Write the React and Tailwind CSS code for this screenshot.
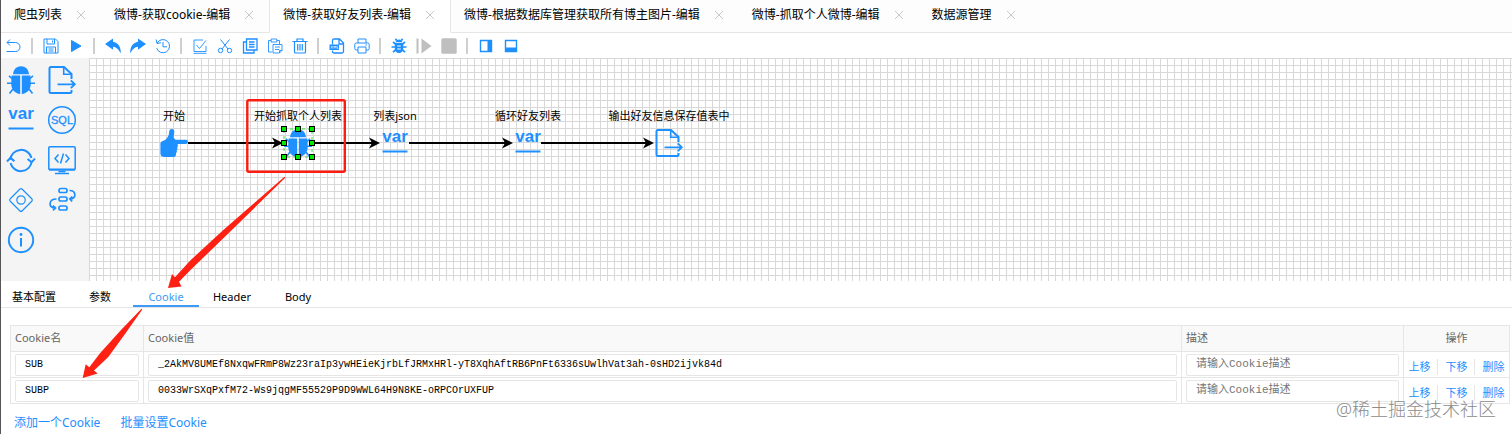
import { useState } from 'react'

const TABS = [
  '爬虫列表',
  '微博-获取cookie-编辑',
  '微博-获取好友列表-编辑',
  '微博-根据数据库管理获取所有博主图片-编辑',
  '微博-抓取个人微博-编辑',
  '数据源管理',
]

const PANELS = ['基本配置', '参数', 'Cookie', 'Header', 'Body']

const COOKIES = [
  { name: 'SUB', value: '_2AkMV8UMEf8NxqwFRmP8Wz23raIp3ywHEieKjrbLfJRMxHRl-yT8XqhAftRB6PnFt6336sUwlhVat3ah-0sHD2ijvk84d', desc: '' },
  { name: 'SUBP', value: '0033WrSXqPxfM72-Ws9jqgMF55529P9D9WWL64H9N8KE-oRPCOrUXFUP', desc: '' },
]

/* ---------- shape icons (28 x 28) ---------- */

function Shape({ children, width = 2 }) {
  return (
    <svg viewBox="0 0 28 28" className="h-7 w-7 overflow-visible" fill="none" stroke="currentColor" strokeWidth={width} aria-hidden="true">
      {children}
    </svg>
  )
}

function BugShape() {
  return (
    <Shape width={1.6}>
      <path d="M6 8.2C6.6 3.2 9.6.3 14 .3s7.4 2.900 8 7.900z" fill="currentColor" stroke="none" />
      <path d="M4.600 9.600h8.600V28C8 27.600 4.200 23.600 4.200 17.500zM14.800 9.600h8.600l.4 7.900c0 6.100-3.800 10.100-9 10.500z" fill="currentColor" stroke="none" />
      <path d="M0 17.300h5M23 17.300h5M5.500 13 2 9.800M22.500 13 26 9.800M6 23l-3.500 4.600M22 23l3.500 4.600" />
    </Shape>
  )
}

function OutputShape() {
  return (
    <Shape>
      <path d="M23.500 13V8L16 1H3Q1.500 1 1.500 2.500v23Q1.500 27 3 27h19q1.500 0 1.500-1.500V24" />
      <path d="M15.700 1v7.300h7.800" strokeWidth="1.600" />
      <path d="M9.500 18.300h17M22.800 14.400l4 3.900-4 3.900" strokeWidth="1.800" />
    </Shape>
  )
}

function VarShape() {
  return (
    <Shape>
      <text x="14" y="13" textAnchor="middle" fill="currentColor" stroke="none" fontSize="17" fontWeight="700" fontFamily="Liberation Sans, sans-serif">var</text>
      <path d="M1.500 22.500h25" />
    </Shape>
  )
}

function SqlShape() {
  return (
    <Shape width={1.5}>
      <circle cx="14" cy="14" r="13.300" />
      <text x="14" y="18" textAnchor="middle" fill="currentColor" stroke="currentColor" strokeWidth=".3" fontSize="11" fontFamily="Liberation Sans Narrow, Liberation Sans, sans-serif">SQL</text>
    </Shape>
  )
}

function LoopShape() {
  return (
    <Shape width={2}>
      <path d="M3.300 13.500A10.800 10.800 0 0 1 24.500 12M24.700 15.500A10.800 10.800 0 0 1 3.500 17" />
      <path d="M0 15.500l3.400-3.600 4 3.200M20.600 13l4 3.200 3.400-3.600" />
    </Shape>
  )
}

function ScriptShape() {
  return (
    <Shape width={1.5}>
      <rect x=".8" y=".8" width="26.400" height="23" rx="1.200" />
      <path d="M1 23.500h26" strokeWidth="2" />
      <path d="M10.500 25.500h7M7 27.500h14" strokeWidth="1.400" />
      <path d="M10.500 8.500 7 12.500l3.500 4M17.500 8.500l3.500 4-3.500 4M15.500 7.500l-3 10" />
    </Shape>
  )
}

function DiamondShape() {
  return (
    <Shape width={1.2}>
      <rect x="5.500" y="5.500" width="17" height="17" rx="1.800" transform="rotate(45 14 14)" />
      <circle cx="14" cy="14" r="4.200" />
    </Shape>
  )
}

function FlowShape() {
  return (
    <Shape width={1.7}>
      <rect x="11" y="2.500" width="8" height="4" rx="1.800" />
      <rect x="11" y="11" width="8" height="4" rx="1.800" />
      <rect x="11" y="20" width="8" height="4" rx="1.800" />
      <path d="M21.500 4.500c7 0 7 8.500.8 8.500M24.200 10.500 21.800 13l2.400 2.300" />
      <path d="M8.500 13c-8.300 0-8.300 9-1.500 9M5 19.600 7.500 22 5 24.400" />
    </Shape>
  )
}

function InfoShape() {
  return (
    <Shape width={1.9}>
      <circle cx="14" cy="14" r="12.200" />
      <path d="M14 12v8.500" strokeWidth="2" />
      <circle cx="14" cy="8.500" r="1.400" fill="currentColor" stroke="none" />
    </Shape>
  )
}

function HandShape() {
  return (
    <Shape>
      <path
        d="M11.800 0c1.700 0 2.700 1.300 2.500 3l-.7 5.500 1.800 2.200h10.500a2 2 0 0 1 0 4.200H17.600c.5 1.400.4 2.600-.4 3.400.5 1.300.3 2.300-.5 3.100.3 1.200.1 2.200-.7 2.900.2 2.400-.6 3.700-2.400 3.700H4.300C1.900 28 .4 26.500.4 24.500V15c0-1.700.8-2.500 2.400-3C6.600 10.600 9 7.500 9.200 2.500 9.300.8 10.400 0 11.800 0z"
        fill="currentColor"
        stroke="none"
      />
    </Shape>
  )
}

const PALETTE = [
  { label: '爬虫', icon: BugShape },
  { label: '输出', icon: OutputShape },
  { label: '变量', icon: VarShape },
  { label: 'SQL', icon: SqlShape },
  { label: '循环', icon: LoopShape },
  { label: '脚本', icon: ScriptShape },
  { label: '条件', icon: DiamondShape },
  { label: '子流程', icon: FlowShape },
  { label: '注释', icon: InfoShape },
]

/* ---------- toolbar icons (16 x 16) ---------- */

const TOOLS = [
  { label: '返回', art: <path d="M4 1.500 1 4.500l3 3M1 4.500h8.500a4.500 4.500 0 0 1 0 9H.5" /> },
  null,
  { label: '保存', art: <path d="M1 1h11.500L15 3.500V15H1zM4 1v5h7.500V1M9.500 2.500v2M3.500 15V9h9v6M5.500 11h5M5.500 13h5" /> },
  { label: '运行', art: <path d="M3.500 2.500 13 8l-9.500 5.500z" fill="currentColor" /> },
  null,
  { label: '撤销', art: <path d="M0 6 8 .5v3.300c4.800.7 8 4.700 7.800 11.500C13.500 11.500 11.500 9 8 8.800v3z" fill="currentColor" stroke="none" /> },
  { label: '重做', art: <path d="M16 6 8 .5v3.300C3.200 4.500 0 8.500.2 15.300 2.500 11.500 4.500 9 8 8.800v3z" fill="currentColor" stroke="none" /> },
  { label: '历史', art: <path d="M2.200 5A6.600 6.600 0 1 1 1.700 10.200M1.200 1.500l.8 4 4-.8M8 4v4.800h4" /> },
  null,
  { label: '全选', art: <path d="M14 8v5.500H2V2h9M4.500 7l3 3.500L14 2.500M1.500 15.300h13" strokeWidth=".9" /> },
  {
    label: '剪切',
    art: (
      <>
        <path d="M3.500 1.500 11 11M12.500 1.500 5 11" />
        <circle cx="3.500" cy="12.500" r="2.200" />
        <circle cx="12.500" cy="12.500" r="2.200" />
      </>
    ),
  },
  { label: '复制', art: <path d="M4.500 1H15v11H4.500zM4.500 4h-3v11H12v-3M7 4h5.500M7 6.500h5.500M7 9h5.500" strokeWidth="1.300" /> },
  { label: '粘贴', art: <path d="M5 14H1.500V2.500H4M10 2.500h2.500V6M4.200 1h5.600v3H4.200zM6 6.500h9v6L12.500 15H6zM8 9h5M8 11.500h4M12.500 15v-2.500H15" strokeWidth=".9" /> },
  { label: '删除', art: <path d="M.5 3.500h15M5 3.500V1h6v2.500M2.500 3.500V14q0 1 1 1h9q1 0 1-1V3.500M5.700 6v6.500M8 6v6.500M10.300 6v6.500" strokeWidth="1.200" /> },
  null,
  {
    label: '导出XML',
    art: (
      <>
        <path d="M3.500 6.500v-4q0-1.500 1.500-1.500h5.500l4 4v8.500q0 1.500-1.500 1.500H5q-1.500 0-1.500-1.500v-1M10 1.500V6h4.500" strokeWidth="1.300" />
        <path d="M.5 6.500h9.500v5.500H.5z" fill="currentColor" stroke="none" />
        <path d="M2 8l1.600 2.500M3.600 8 2 10.500M5 10.500V8l1 1.500L7 8v2.500M8.300 8v2.500h1" stroke="#fff" strokeWidth=".6" />
      </>
    ),
  },
  { label: '打印', art: <path d="M4 5V1h8v4M4 12H2.200Q.8 12 .8 10.600V6.500Q.8 5 2.300 5h11.400q1.500 0 1.500 1.500v4.100q0 1.400-1.400 1.400H12M4 9h8v6H4zM11.500 7h1.500" /> },
  null,
  {
    label: '调试',
    art: (
      <>
        <path d="M4.800 4.200C4.800 2.500 6 1.500 8 1.500s3.200 1 3.200 2.700zM3.800 5h8.400v5.500c0 2.600-1.700 4.500-4.200 4.500s-4.200-1.900-4.200-4.500z" fill="currentColor" stroke="none" />
        <path d="M4.500 6 2 4M11.500 6 14 4M.5 9H4M12 9h3.500M4.500 12 2 14.200M11.500 12l2.500 2.200M5.500 2.500l-1-1.700M10.500 2.500l1-1.700" strokeWidth="1.700" />
        <path d="M6.200 8h3.600M6.200 11h3.600" stroke="#fff" strokeWidth="1.200" />
      </>
    ),
  },
  { label: '下一步', off: true, art: <path d="M.5.5h2v15h-2zM5.500.5l10 7.500-10 7.500z" fill="currentColor" stroke="none" /> },
  { label: '停止', off: true, art: <rect x=".3" y=".3" width="15.400" height="15.400" rx="1.500" fill="currentColor" stroke="none" /> },
  null,
  { label: '右侧布局', art: <path d="M2.500 2.500h11v11h-11z" strokeWidth="1.400" />, side: 'right' },
  { label: '底部布局', art: <path d="M2.500 2.500h11v11h-11z" strokeWidth="1.400" />, side: 'bottom' },
]

function ToolIcon({ tool }) {
  return (
    <svg viewBox="0 0 16 16" className="h-4 w-4" fill="none" stroke="currentColor" strokeWidth="1" aria-hidden="true">
      {tool.art}
      {tool.side === 'right' && <rect x="9.500" y="2.500" width="4" height="11" fill="currentColor" stroke="none" />}
      {tool.side === 'bottom' && <rect x="2.500" y="9.500" width="11" height="4" fill="currentColor" stroke="none" />}
    </svg>
  )
}

/* ---------- flow canvas ---------- */

const NODES = [
  { id: 'start', label: '开始', x: 71, y: 71, icon: HandShape },
  { id: 'friends', label: '开始抓取个人列表', x: 195, y: 71, icon: BugShape },
  { id: 'json', label: '列表json', x: 292, y: 71, icon: VarShape },
  { id: 'each', label: '循环好友列表', x: 425, y: 71, icon: VarShape },
  { id: 'save', label: '输出好友信息保存值表中', x: 566, y: 71, icon: OutputShape },
]

const EDGES = [
  [99, 194],
  [223, 291],
  [320, 424],
  [452, 565],
]

const HANDLES = [[0, 0], [14, 0], [28, 0], [0, 14], [28, 14], [0, 28], [14, 28], [28, 28]]

function Selection() {
  return (
    <svg viewBox="0 0 28 28" className="absolute inset-0 h-7 w-7 overflow-visible" aria-hidden="true">
      <rect width="28" height="28" fill="none" stroke="#3fdc3f" strokeDasharray="3 3" />
      {HANDLES.map(([x, y]) => (
        <rect key={`${x}-${y}`} x={x - 2.5} y={y - 2.5} width="5" height="5" fill="#00e800" stroke="#000" />
      ))}
    </svg>
  )
}

function Canvas() {
  const [selected, setSelected] = useState('friends')
  return (
    <div className="relative min-w-0 flex-1 overflow-hidden bg-white bg-[linear-gradient(to_right,#d8d8d8_1px,transparent_1px),linear-gradient(to_bottom,#d8d8d8_1px,transparent_1px)] bg-[length:7px_7px]">
      <svg className="absolute inset-0 h-full w-full" aria-hidden="true">
        {EDGES.map(([from, to]) => (
          <g key={from}>
            <path d={`M${from} 85H${to - 6}`} stroke="#000" strokeWidth="2" />
            <path d={`M${to} 85l-11-5.500 3 5.500-3 5.500z`} fill="#000" />
          </g>
        ))}
      </svg>
      {NODES.map((n) => (
        <button key={n.id} onClick={() => setSelected(n.id)} className="absolute h-7 w-7 text-[#1e90ff]" style={{ left: n.x, top: n.y }}>
          <span className="absolute bottom-full left-1/2 mb-[3px] -translate-x-1/2 text-[11px] leading-5 whitespace-nowrap text-black">{n.label}</span>
          <n.icon />
          {selected === n.id && <Selection />}
        </button>
      ))}
    </div>
  )
}

/* red marks drawn over the editor */
function Marks() {
  return (
    <svg className="pointer-events-none absolute inset-0 h-full w-full" fill="#ff2014" aria-hidden="true">
      <rect x="246.300" y="100.200" width="97.500" height="71.600" rx="1.500" fill="none" stroke="#fb1c12" strokeWidth="2.400" />
      <path d="M283.500 176.800 222.300 230 189 260.700 174 277.300 171 274 167 288l13.500-1.500-2.500-4.800 11-11.200L225.700 235 284.300 177.800z" />
      <path d="M140.500 308.700 120 330 99 353.300 88.300 367.300 84.700 364.300 81.700 378l15-4.500-3.700-3 14.300-13.500L124 334 141.300 309.500z" />
    </svg>
  )
}

function CellInput({ label, ...props }) {
  return (
    <input
      aria-label={label}
      className="block h-[22px] w-full rounded-xs border border-[#e6e6e6] bg-white px-[9px] font-['Liberation_Mono','Noto_Sans_CJK_SC',monospace] text-[10px] leading-5 text-black outline-none placeholder:text-[11px] placeholder:text-[#757575]"
      {...props}
    />
  )
}

function CookieTable() {
  const [rows, setRows] = useState(COOKIES)
  const edit = (i, key) => (e) => setRows((rs) => rs.map((r, n) => (n === i ? { ...r, [key]: e.target.value } : r)))
  const add = () => setRows((rs) => [...rs, { name: '', value: '', desc: '' }])
  const remove = (i) => setRows((rs) => rs.filter((_, n) => n !== i))

  function move(i, step) {
    const to = i + step
    if (to < 0 || to >= rows.length) return
    const next = [...rows]
    ;[next[i], next[to]] = [next[to], next[i]]
    setRows(next)
  }

  return (
    <div className="pt-[17px] pr-0.5 pl-[9px]">
      <table className="w-full table-fixed border-collapse text-[11px]">
        <colgroup>
          <col className="w-[133px]" />
          <col />
          <col className="w-[222px]" />
          <col className="w-[106px]" />
        </colgroup>
        <thead>
          <tr className="h-[26px] bg-[#f9f9f9] text-left text-[#666]">
            <th className="border border-[#e6e6e6] px-1 font-normal">Cookie名</th>
            <th className="border border-[#e6e6e6] px-1 font-normal">Cookie值</th>
            <th className="border border-[#e6e6e6] px-1 font-normal">描述</th>
            <th className="border border-[#e6e6e6] px-1 text-center font-normal">操作</th>
          </tr>
        </thead>
        <tbody>
          {rows.map((r, i) => (
            <tr key={i} className="h-[26px]">
              <td className="border border-[#e6e6e6] px-1 py-px"><CellInput label="Cookie名" value={r.name} onChange={edit(i, 'name')} /></td>
              <td className="border border-[#e6e6e6] px-1 py-px"><CellInput label="Cookie值" value={r.value} onChange={edit(i, 'value')} /></td>
              <td className="border border-[#e6e6e6] px-1 py-px"><CellInput label="描述" placeholder="请输入Cookie描述" value={r.desc} onChange={edit(i, 'desc')} /></td>
              <td className="border border-[#e6e6e6] px-1 pt-1">
                <div className="flex justify-center divide-x divide-[#e6e6e6] leading-4 text-[#1e8fff]">
                  <button className="pr-1.5" onClick={() => move(i, -1)}>上移</button>
                  <button className="px-1.5 pl-2" onClick={() => move(i, 1)}>下移</button>
                  <button className="pl-2" onClick={() => remove(i)}>删除</button>
                </div>
              </td>
            </tr>
          ))}
        </tbody>
      </table>
      <div className="flex gap-5 pt-[9px] pl-1 text-xs leading-5 text-[#1e8fff]">
        <button onClick={add}>添加一个Cookie</button>
        <button>批量设置Cookie</button>
      </div>
    </div>
  )
}

export default function App() {
  const [tab, setTab] = useState(2)
  const [panel, setPanel] = useState('Cookie')

  return (
    <div className="relative min-h-screen overflow-hidden border-l border-[#55555a] bg-white font-['Noto_Sans','Noto_Sans_CJK_SC',sans-serif] text-black">
      {/* page tabs */}
      <div className="flex h-[33px] text-xs whitespace-nowrap">
        {TABS.map((t, i) => (
          <div
            key={t}
            className={`flex items-center gap-3.5 border-b pr-[15px] pb-0.5 pl-[13px] ${i === tab ? 'border-x border-x-[#e6e6e6] border-b-white bg-white' : 'border-[#e6e6e6] bg-[#fdfdfd]'}`}
          >
            <button onClick={() => setTab(i)} className="h-7">{t}</button>
            <button aria-label="关闭" className="text-[#c8c8c8]">
              <svg viewBox="0 0 10 10" className="h-2.5 w-2.5" stroke="currentColor" aria-hidden="true">
                <path d="M1 1l8 8M9 1 1 9" />
              </svg>
            </button>
          </div>
        ))}
        <div className="flex-1 border-b border-[#e6e6e6] bg-[#fdfdfd]" />
      </div>

      {/* toolbar */}
      <div className="flex h-[25px] items-center">
        {TOOLS.map((t, i) =>
          t ? (
            <button key={i} aria-label={t.label} className={`flex w-[25px] justify-center ${t.off ? 'text-[#bfbfbf]' : 'text-[#1e8fff]'}`}>
              <ToolIcon tool={t} />
            </button>
          ) : (
            <span key={i} className="flex w-3 justify-center"><span className="h-4 w-0.5 bg-[#cfcfcf]" /></span>
          )
        )}
      </div>

      <div className="flex">
        <div className="w-[88px] shrink-0 bg-[#f4f4f4] pt-0.5 pb-[21px]">
          <div className="grid w-[81px] grid-cols-2 gap-x-px">
            {PALETTE.map((p) => (
              <button key={p.label} aria-label={p.label} className="flex h-10 items-center justify-center text-[#1e8fff]">
                <p.icon />
              </button>
            ))}
          </div>
        </div>
        <Canvas />
      </div>

      {/* node settings */}
      <div className="flex border-b border-[#e6e6e6] text-[11px]">
        {PANELS.map((p) => (
          <button
            key={p}
            onClick={() => setPanel(p)}
            className={`h-[26px] w-[66px] border-b-2 pt-2 leading-4 ${p === panel ? 'border-[#3d9bf5] text-[#3d9bf5]' : 'border-transparent'}`}
          >
            {p}
          </button>
        ))}
      </div>
      <CookieTable />

      <Marks />
      <div className="pointer-events-none absolute right-4 bottom-4 text-lg leading-none font-light text-[#8c8c8c]">@稀土掘金技术社区</div>
    </div>
  )
}
